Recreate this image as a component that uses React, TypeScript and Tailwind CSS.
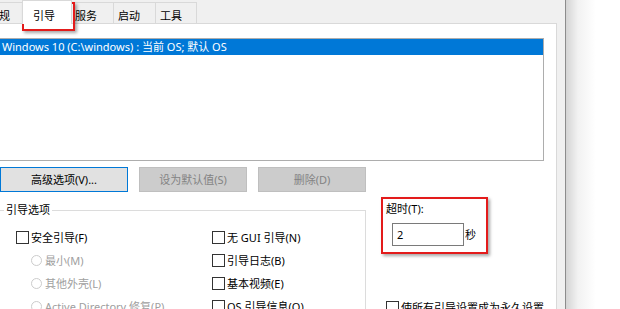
import type { ReactNode } from 'react';

const FONT = "font-['Noto_Sans','Noto_Sans_CJK_SC',sans-serif]";

function Tab({ label, width, selected }: { label: string; width: string; selected?: boolean }) {
  if (selected) {
    return (
      <div
        className={`relative z-10 -mx-[2px] -mb-px h-[24px] border border-b-0 border-[#d9d9d9] bg-white pl-[10px] pt-[8px] text-[11px] leading-[14px] text-black ${width}`}
      >
        {label}
      </div>
    );
  }
  return (
    <div
      className={`h-[21px] border-l border-t border-[#d9d9d9] bg-[#f0f0f0] pl-[4px] pt-[6px] text-[11px] leading-[14px] text-black last:border-r ${width}`}
    >
      {label}
    </div>
  );
}

function Check({ children, className = '' }: { children: ReactNode; className?: string }) {
  return (
    <div className={`flex h-[23px] items-center gap-[2px] ${className}`}>
      <span className="h-[13px] w-[13px] shrink-0 border border-[#333333] bg-white" />
      <span className="text-[11px] leading-[14px] text-black whitespace-nowrap">{children}</span>
    </div>
  );
}

function Radio({ children }: { children: ReactNode }) {
  return (
    <div className="flex h-[23px] items-center gap-[3px] pl-[15px]">
      <span className="h-[11px] w-[11px] shrink-0 rounded-full border border-[#cccccc] bg-white" />
      <span className="text-[11px] leading-[14px] text-[#a0a0a0] whitespace-nowrap">{children}</span>
    </div>
  );
}

function Button({ children, focused, disabled, width }: { children: ReactNode; focused?: boolean; disabled?: boolean; width: string }) {
  return (
    <button
      type="button"
      className={`h-[25px] border text-center text-[11px] leading-[14px] ${width} ${
        focused
          ? 'border-[#0078d7] bg-[#e1e1e1] text-black'
          : disabled
            ? 'border-[#bfbfbf] bg-[#cccccc] text-[#838383]'
            : 'border-[#adadad] bg-[#e1e1e1] text-black'
      }`}
    >
      {children}
    </button>
  );
}

export default function App() {
  return (
    <div className={`relative flex h-[309px] w-[620px] overflow-hidden bg-white ${FONT}`}>
      <div className="flex w-[566px] shrink-0 flex-col border-r border-[#8c8c8c] bg-[#f0f0f0] pr-[8px]">
        <div className="-ml-[17px] flex h-[26px] items-end">
          <Tab label="常规" width="w-[41px]" />
          <Tab label="引导" width="w-[50px]" selected />
          <Tab label="服务" width="w-[43px]" />
          <Tab label="启动" width="w-[42px]" />
          <Tab label="工具" width="w-[42px]" />
        </div>

        <div className="-ml-[13px] flex-1 border-l border-r border-t border-[#d9d9d9] bg-white pl-[12px] pr-[12px] pt-[14px]">
          <div className="-ml-px h-[123px] border border-[#adadad] bg-white">
            <div className="h-[16px] bg-[#0078d7] pl-[2px] text-[11px] leading-[16px] text-white">
              {'Windows 10 (C:\\windows) : 当前 OS; 默认 OS'}
            </div>
          </div>

          <div className="mt-[6px] flex gap-[11px]">
            <Button focused width="w-[128px]">高级选项(V)...</Button>
            <Button disabled width="w-[108px]">设为默认值(S)</Button>
            <Button disabled width="w-[108px]">删除(D)</Button>
          </div>

          <div className="mt-[9px] flex items-start">
            <fieldset className="-ml-[6px] mt-[2px] w-[372px] shrink-0 border-l border-r border-t border-[#dcdcdc] pb-[20px]">
              <legend className="ml-[9px] px-[2px] text-[11px] leading-[14px] text-black">引导选项</legend>
              <div className="grid grid-cols-[196px_1fr] pl-[21px] pt-[9px]">
                <div className="flex flex-col">
                  <Check>安全引导(F)</Check>
                  <Radio>最小(M)</Radio>
                  <Radio>其他外壳(L)</Radio>
                  <Radio>Active Directory 修复(P)</Radio>
                </div>
                <div className="flex flex-col">
                  <Check>无 GUI 引导(N)</Check>
                  <Check>引导日志(B)</Check>
                  <Check>基本视频(E)</Check>
                  <Check>OS 引导信息(O)</Check>
                </div>
              </div>
            </fieldset>

            <div className="ml-[20px] mt-[1px] flex flex-col">
              <div className="text-[11px] leading-[14px] text-black">超时(T):</div>
              <div className="ml-[6px] mt-[7px] flex items-center">
                <div className="h-[23px] w-[72px] border border-[#7a7a7a] bg-white pl-[4px] text-[11px] leading-[21px] text-black">
                  2
                </div>
                <span className="ml-px text-[11px] leading-[14px] text-black">秒</span>
              </div>
              <Check className="mt-[50px]">使所有引导设置成为永久设置</Check>
            </div>
          </div>
        </div>
      </div>

      <div className="flex-1 bg-[linear-gradient(to_right,#d4d4d4,#f2f2f2_12px,#ffffff_30px)]" />

      {/* annotation boxes */}
      <div className="pointer-events-none absolute left-[22px] top-[2px] h-[29px] w-[53px] border-2 border-[#e31b1b] shadow-[2px_2px_3px_rgba(0,0,0,0.35)]" />
      <div className="pointer-events-none absolute left-[381px] top-[197px] h-[57px] w-[107px] border-2 border-[#e31b1b] shadow-[2px_2px_3px_rgba(0,0,0,0.35)]" />
    </div>
  );
}
